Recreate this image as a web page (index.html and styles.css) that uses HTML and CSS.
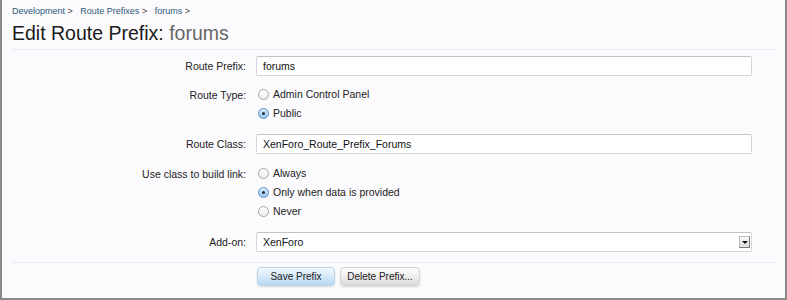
FILE: index.html
```html
<!doctype html>
<html>
<head>
    <link rel="stylesheet" href="styles.css">
</head>
<body>
<div class="frame">
    <div class="breadcrumb">
        <a href="#">Development</a> <span class="sep">&gt;</span>
        <a href="#">Route Prefixes</a> <span class="sep">&gt;</span>
        <a href="#">forums</a> <span class="sep">&gt;</span>
    </div>
    <h1 class="title">Edit Route Prefix: <em>forums</em></h1>

    <form class="form">
        <div class="row">
            <label class="label">Route Prefix:</label>
            <div class="field"><input class="text-input" type="text" value="forums"></div>
        </div>
        <div class="row">
            <label class="label">Route Type:</label>
            <div class="field radios">
                <label class="radio"><span class="dot"></span>Admin Control Panel</label>
                <label class="radio"><span class="dot on"></span>Public</label>
            </div>
        </div>
        <div class="row spaced">
            <label class="label">Route Class:</label>
            <div class="field"><input class="text-input" type="text" value="XenForo_Route_Prefix_Forums"></div>
        </div>
        <div class="row">
            <label class="label">Use class to build link:</label>
            <div class="field radios">
                <label class="radio"><span class="dot"></span>Always</label>
                <label class="radio"><span class="dot on"></span>Only when data is provided</label>
                <label class="radio"><span class="dot"></span>Never</label>
            </div>
        </div>
        <div class="row">
            <label class="label">Add-on:</label>
            <div class="field">
                <div class="select">XenForo<span class="arrow"></span></div>
            </div>
        </div>
        <div class="submit-row">
            <button type="button" class="button primary">Save Prefix</button>
            <button type="button" class="button">Delete Prefix...</button>
        </div>
    </form>
</div>
</body>
</html>
```
FILE: styles.css
```css
html, body {
    margin: 0;
    padding: 0;
    background: #fff;
}

body {
    font-family: "Liberation Sans", Arial, sans-serif;
    font-size: 10.5px;
    color: #222;
}

.frame {
    height: 298px;
    width: 783px;
    background: #fbfbfe;
    border: 2px solid #8a8a8a;
    border-top: none;
}

.breadcrumb {
    padding: 5px 0 0 10px;
    font-size: 9px;
    height: 13px;
    line-height: 13px;
}

.breadcrumb a {
    color: #2e5876;
    text-decoration: none;
}

.breadcrumb .sep {
    color: #444;
    margin-right: 5px;
}

.title {
    margin: 2px 0 0 10px;
    font-weight: normal;
    font-size: 19.5px;
    line-height: 26px;
    color: #1a1a1a;
}

.title em {
    font-style: normal;
    color: #666;
}

.form {
    margin: 3px 9px 0 10px;
    border-top: 1px solid #e3ecf2;
    padding-top: 6px;
}

.row {
    display: flex;
    margin-bottom: 9px;
}

.row.spaced {
    margin-bottom: 10px;
}

.label {
    width: 234px;
    text-align: right;
    padding-right: 10px;
    line-height: 20px;
    color: #222;
}

.field {
    width: 496px;
}

.radios {
    display: flex;
    flex-direction: column;
    gap: 3px;
    padding: 1px 0 4px;
}

.radio {
    display: flex;
    align-items: center;
    height: 16px;
}

.dot {
    width: 9px;
    height: 9px;
    border-radius: 50%;
    border: 1px solid #a6a6a6;
    background: linear-gradient(#fff, #ececec);
    margin: 0 4px 0 2px;
    position: relative;
}

.dot.on {
    border-color: #5a8fc4;
    background: linear-gradient(#d9ebfb, #9cc6ee);
}

.dot.on::after {
    content: "";
    position: absolute;
    left: 3px;
    top: 3px;
    width: 3px;
    height: 3px;
    border-radius: 50%;
    background: #1f2f44;
}

.text-input,
.select {
    display: block;
    width: 496px;
    height: 20px;
    box-sizing: border-box;
    border: 1px solid #d6d6d6;
    border-top-color: #c2c2c2;
    background: #fff;
    border-radius: 2px;
    font: inherit;
    color: #111;
    padding: 0 6px;
    margin: 0;
    line-height: 18px;
}

.select {
    position: relative;
}

.arrow {
    position: absolute;
    right: 1px;
    top: 3px;
    width: 11px;
    height: 12px;
    background: linear-gradient(#fafafa, #dedede);
    border: 1px solid #bbb;
    border-right-color: #777;
    border-bottom-color: #777;
    box-sizing: border-box;
}

.arrow::after {
    content: "";
    position: absolute;
    left: 2px;
    top: 4px;
    border-left: 3px solid transparent;
    border-right: 3px solid transparent;
    border-top: 3px solid #111;
}

.submit-row {
    border-top: 1px solid #e3ecf2;
    margin-top: 10px;
    padding: 4px 0 0 245px;
    display: flex;
    gap: 5px;
}

.button {
    font: inherit;
    font-size: 10px;
    color: #222;
    white-space: nowrap;
    width: 80px;
    height: 19px;
    padding: 0;
    border: 1px solid #d4d4d4;
    border-radius: 4px;
    background: linear-gradient(#fdfdfd, #dcdcdc);
    box-shadow: 0 1px 2px rgba(0, 0, 0, 0.15);
}

.button.primary {
    width: 78px;
    border-color: #bfd6ea;
    background: linear-gradient(#f1f8fe, #b8d8f2);
}
```
